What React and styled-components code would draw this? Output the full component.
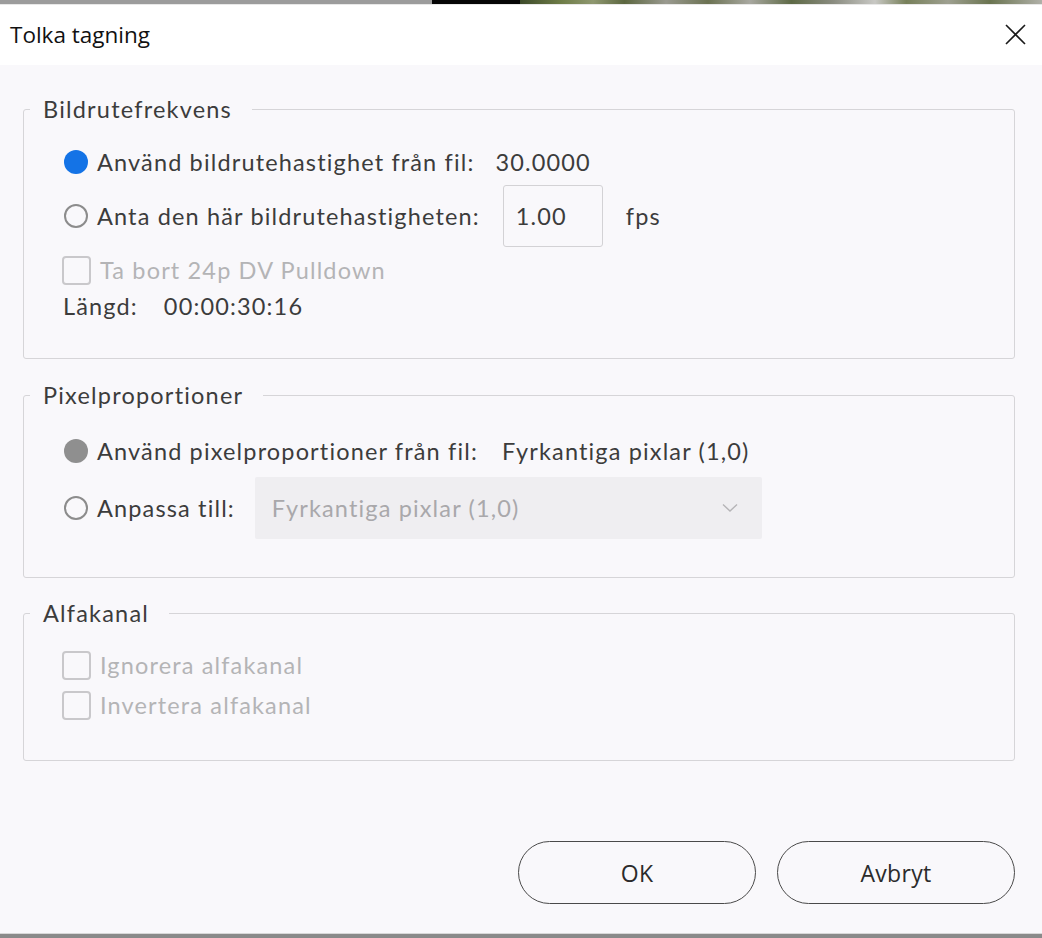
import React from "react";
import styled, { createGlobalStyle } from "styled-components";

const Global = createGlobalStyle`
  html, body { margin: 0; padding: 0; background: #f9f8fb; }
  * { box-sizing: border-box; }
`;

const Window = styled.div`
  width: 1042px;
  height: 938px;
  display: flex;
  flex-direction: column;
  background: #f9f8fb;
  font-family: Lato, "Noto Sans", sans-serif;
  color: #3c3c3c;
  overflow: hidden;
`;

const TopStrip = styled.div`
  height: 5px;
  display: flex;
  border-bottom: 1px solid #e8e8e8;
`;

const StripPart = styled.div`
  width: ${(p) => p.$w}px;
  flex: ${(p) => (p.$w ? "none" : 1)};
  background: ${(p) => p.$bg};
`;

const TitleBar = styled.div`
  height: 60px;
  background: #ffffff;
  display: flex;
  align-items: center;
  justify-content: space-between;
  padding: 0 15px 0 10px;
`;

const Title = styled.div`
  font-family: "Open Sans", "Noto Sans", sans-serif;
  font-size: 22.5px;
  color: #111;
  transform: translateY(-1px);
`;

const CloseButton = styled.button`
  width: 24px;
  height: 24px;
  border: none;
  background: transparent;
  padding: 0;
  display: flex;
  align-items: center;
  justify-content: center;
  transform: translateY(-1px);
`;

const Body = styled.div`
  flex: 1;
  display: flex;
  flex-direction: column;
  padding: 30px 27px 0 23px;
`;

const Group = styled.fieldset`
  margin: 0 0 ${(p) => p.$mb || 0}px 0;
  border: 1px solid #d6d5d8;
  border-radius: 3px;
  padding: ${(p) => p.$pt}px 0 ${(p) => p.$pb}px 39px;
  min-width: 0;
`;

const Legend = styled.legend`
  font-size: 23.5px;
  line-height: 28px;
  letter-spacing: 1.2px;
  color: #3c3c3c;
  margin-left: -33px;
  padding: 0 20px 0 13px;
`;

const Row = styled.div`
  height: ${(p) => p.$h}px;
  display: flex;
  align-items: center;
  font-size: 23.5px;
  letter-spacing: 1.15px;
  color: ${(p) => (p.$disabled ? "#b4b4b6" : "#3c3c3c")};
`;

const Radio = styled.span`
  width: 24px;
  height: 24px;
  border-radius: 50%;
  flex: none;
  margin: 0 9px 0 1px;
  border: ${(p) => (p.$checked ? "none" : "2.5px solid #8c8c8c")};
  background: ${(p) =>
    p.$checked ? (p.$tone === "blue" ? "#1473e6" : "#8f8f8f") : "transparent"};
`;

const Checkbox = styled.span`
  width: 29px;
  height: 29px;
  flex: none;
  border: 2.5px solid #c9c8cb;
  border-radius: 4px;
  margin: 0 9px 0 -1px;
`;

const Value = styled.span`
  margin-left: ${(p) => p.$ml}px;
`;

const NumberBox = styled.div`
  width: 100px;
  height: 62px;
  margin-left: 23px;
  border: 1px solid #d3d2d5;
  border-radius: 3px;
  display: flex;
  align-items: center;
  padding-left: 12px;
`;

const Unit = styled.span`
  margin-left: 23px;
`;

const Select = styled.div`
  width: 507px;
  height: 62px;
  margin-left: 20px;
  background: #efeef1;
  border-radius: 2px;
  display: flex;
  align-items: center;
  justify-content: space-between;
  padding: 0 24px 0 17px;
  color: #a9a8ab;
`;

const Footer = styled.div`
  display: flex;
  justify-content: flex-end;
  gap: 21px;
  margin-top: 80px;
`;

const PillButton = styled.button`
  width: 238px;
  height: 63px;
  border-radius: 32px;
  border: 1.5px solid #4a4a4a;
  background: transparent;
  font-family: "Open Sans", "Noto Sans", sans-serif;
  font-size: 23px;
  letter-spacing: 0.3px;
  color: #2b2b2b;
`;

const BottomStrip = styled.div`
  height: 5px;
  background: #8a8a8a;
  border-top: 1px solid #d8d8d8;
`;

const photo =
  "linear-gradient(90deg, #3d4a2a 0%, #6f7d48 8%, #8f9870 14%, #5c6740 20%, #9a9a90 28%, #6b7252 36%, #a8a8a0 44%, #5e6a46 52%, #8a8c80 60%, #c8c8c4 68%, #77805a 74%, #9ea090 82%, #6a7450 90%, #b0b0a8 100%)";

const Chevron = () => (
  <svg width="16" height="10" viewBox="0 0 16 10" fill="none">
    <path d="M1 1.5 L8 8 L15 1.5" stroke="#b5b4b7" strokeWidth="1.4" />
  </svg>
);

const CloseIcon = () => (
  <svg width="21" height="21" viewBox="0 0 21 21" fill="none">
    <path d="M1 1 L20 20 M20 1 L1 20" stroke="#1a1a1a" strokeWidth="1.6" />
  </svg>
);

export default function App() {
  return (
    <>
      <Global />
      <Window>
        <TopStrip>
          <StripPart $w={432} $bg="#9c9c9c" />
          <StripPart $w={88} $bg="#050505" />
          <StripPart $bg={photo} />
        </TopStrip>
        <TitleBar>
          <Title>Tolka tagning</Title>
          <CloseButton aria-label="Stäng">
            <CloseIcon />
          </CloseButton>
        </TitleBar>
        <Body>
          <Group $pt={17} $pb={38} $mb={22}>
            <Legend>Bildrutefrekvens</Legend>
            <Row $h={44}>
              <Radio $checked $tone="blue" />
              Använd bildrutehastighet från fil:
              <Value $ml={21}>30.0000</Value>
            </Row>
            <Row $h={64}>
              <Radio />
              Anta den här bildrutehastigheten:
              <NumberBox>1.00</NumberBox>
              <Unit>fps</Unit>
            </Row>
            <Row $h={44} $disabled>
              <Checkbox />
              Ta bort 24p DV Pulldown
            </Row>
            <Row $h={28}>
              Längd:
              <Value $ml={26}>00:00:30:16</Value>
            </Row>
          </Group>

          <Group $pt={17} $pb={37} $mb={21}>
            <Legend>Pixelproportioner</Legend>
            <Row $h={50}>
              <Radio $checked $tone="gray" />
              Använd pixelproportioner från fil:
              <Value $ml={24}>Fyrkantiga pixlar (1,0)</Value>
            </Row>
            <Row $h={64}>
              <Radio />
              Anpassa till:
              <Select>
                Fyrkantiga pixlar (1,0)
                <Chevron />
              </Select>
            </Row>
          </Group>

          <Group $pt={18} $pb={35}>
            <Legend>Alfakanal</Legend>
            <Row $h={40} $disabled>
              <Checkbox />
              Ignorera alfakanal
            </Row>
            <Row $h={40} $disabled>
              <Checkbox />
              Invertera alfakanal
            </Row>
          </Group>

          <Footer>
            <PillButton>OK</PillButton>
            <PillButton>Avbryt</PillButton>
          </Footer>
        </Body>
        <BottomStrip />
      </Window>
    </>
  );
}
